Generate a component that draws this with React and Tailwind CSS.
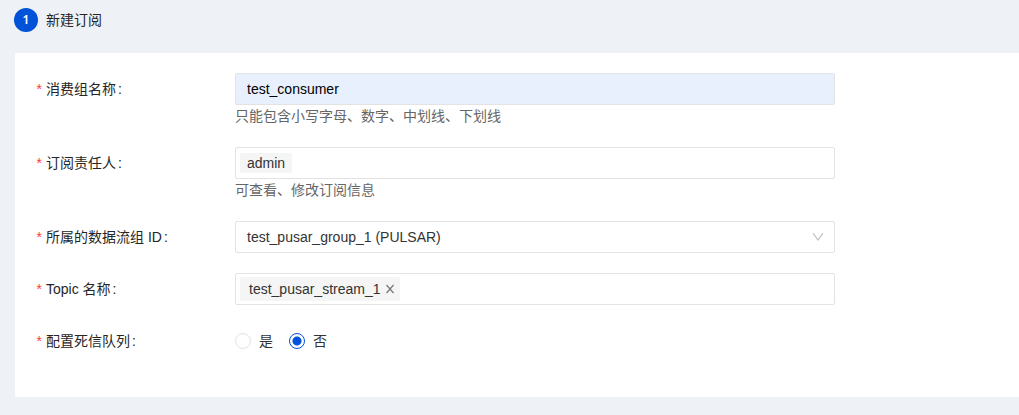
import { useState } from 'react';

function Label({ htmlFor, id, children }) {
  const Tag = htmlFor ? 'label' : 'span';
  return (
    <Tag htmlFor={htmlFor} id={id} className="flex h-8 w-50 shrink-0 items-center text-[#262626]">
      <span aria-hidden="true" className="w-[11px] shrink-0 pt-1 font-['Liberation_Mono',monospace] text-sm text-[#ff3b3b]">
        *
      </span>
      {children}
      <span className="ml-0.5">:</span>
    </Tag>
  );
}

function Row({ label, htmlFor, labelId, hint, children }) {
  return (
    <div className="flex">
      <Label htmlFor={htmlFor} id={labelId}>{label}</Label>
      <div className="w-full max-w-150 min-w-0">
        {children}
        {hint && <p className="text-[#666]">{hint}</p>}
      </div>
    </div>
  );
}

function Radio({ name, label, checked, onChange }) {
  return (
    <label className="flex items-center gap-2">
      <input
        type="radio"
        name={name}
        checked={checked}
        onChange={onChange}
        className="size-4 appearance-none rounded-full border border-[#e3e3e3] bg-white checked:border-[#0052d9] checked:bg-[radial-gradient(circle,#0052d9_4px,transparent_5px)]"
      />
      {label}
    </label>
  );
}

export default function App() {
  const [deadLetter, setDeadLetter] = useState(false);
  const [topics, setTopics] = useState(['test_pusar_stream_1']);

  return (
    <main className="min-h-screen bg-[#eef1f6] pb-4 font-['Liberation_Sans','Noto_Sans_CJK_SC',sans-serif] text-sm leading-[22px] text-[#333]">
      <header className="flex h-[53px] items-start gap-2 px-3.5 pt-2">
        <span className="flex size-6 items-center justify-center rounded-full bg-[#0052d9] font-['Noto_Sans',sans-serif] text-xs font-semibold text-white">
          1
        </span>
        <h1 className="leading-6 text-[#262626]">新建订阅</h1>
      </header>

      <form className="ml-[15px] flex flex-col gap-5 bg-white px-5 pt-5 pb-10">
        <Row label="消费组名称" htmlFor="consumer" hint="只能包含小写字母、数字、中划线、下划线">
          <input
            id="consumer"
            defaultValue="test_consumer"
            className="block h-8 w-full rounded-xs border border-[#e3e3e3] bg-[#e8f0fe] px-[11px] text-black outline-none"
          />
        </Row>

        <Row label="订阅责任人" htmlFor="owner" hint="可查看、修改订阅信息">
          <div className="flex h-8 items-center gap-1 rounded-xs border border-[#e3e3e3] px-1">
            <span className="h-5 rounded-xs bg-[#f5f5f5] px-[7px] leading-5">admin</span>
            <input id="owner" className="h-6 min-w-0 flex-1 outline-none" />
          </div>
        </Row>

        <Row label="所属的数据流组 ID" htmlFor="group">
          <div className="relative">
            <select
              id="group"
              className="block h-8 w-full appearance-none rounded-xs border border-[#e3e3e3] bg-white pr-8 pl-[11px] outline-none"
            >
              <option>test_pusar_group_1 (PULSAR)</option>
            </select>
            <svg
              viewBox="0 0 12 12"
              className="pointer-events-none absolute top-2.5 right-[11px] size-3 fill-none stroke-[#bfbfbf]"
              aria-hidden="true"
            >
              <path d="M1.2 2.4 6 9l4.8-6.6" strokeWidth="1.2" />
            </svg>
          </div>
        </Row>

        <Row label="Topic 名称" htmlFor="topic">
          <div className="flex h-8 items-center gap-1 rounded-xs border border-[#e3e3e3] px-1">
            {topics.map((topic) => (
              <span key={topic} className="flex h-6 items-center gap-1 rounded-xs bg-[#f5f5f5] pr-[5px] pl-[9px]">
                {topic}
                <button
                  type="button"
                  aria-label={`移除 ${topic}`}
                  onClick={() => setTopics(topics.filter((t) => t !== topic))}
                >
                  <svg viewBox="0 0 10 10" className="size-2.5 fill-none stroke-[#777]" aria-hidden="true">
                    <path d="m1.5 1 7 8M8.5 1l-7 8" strokeWidth="1.2" />
                  </svg>
                </button>
              </span>
            ))}
            <input id="topic" className="h-6 min-w-0 flex-1 outline-none" />
          </div>
        </Row>

        <Row label="配置死信队列" labelId="dead-letter">
          <div role="radiogroup" aria-labelledby="dead-letter" className="flex h-8 items-center gap-4">
            <Radio name="deadLetter" label="是" checked={deadLetter} onChange={() => setDeadLetter(true)} />
            <Radio name="deadLetter" label="否" checked={!deadLetter} onChange={() => setDeadLetter(false)} />
          </div>
        </Row>
      </form>
    </main>
  );
}
